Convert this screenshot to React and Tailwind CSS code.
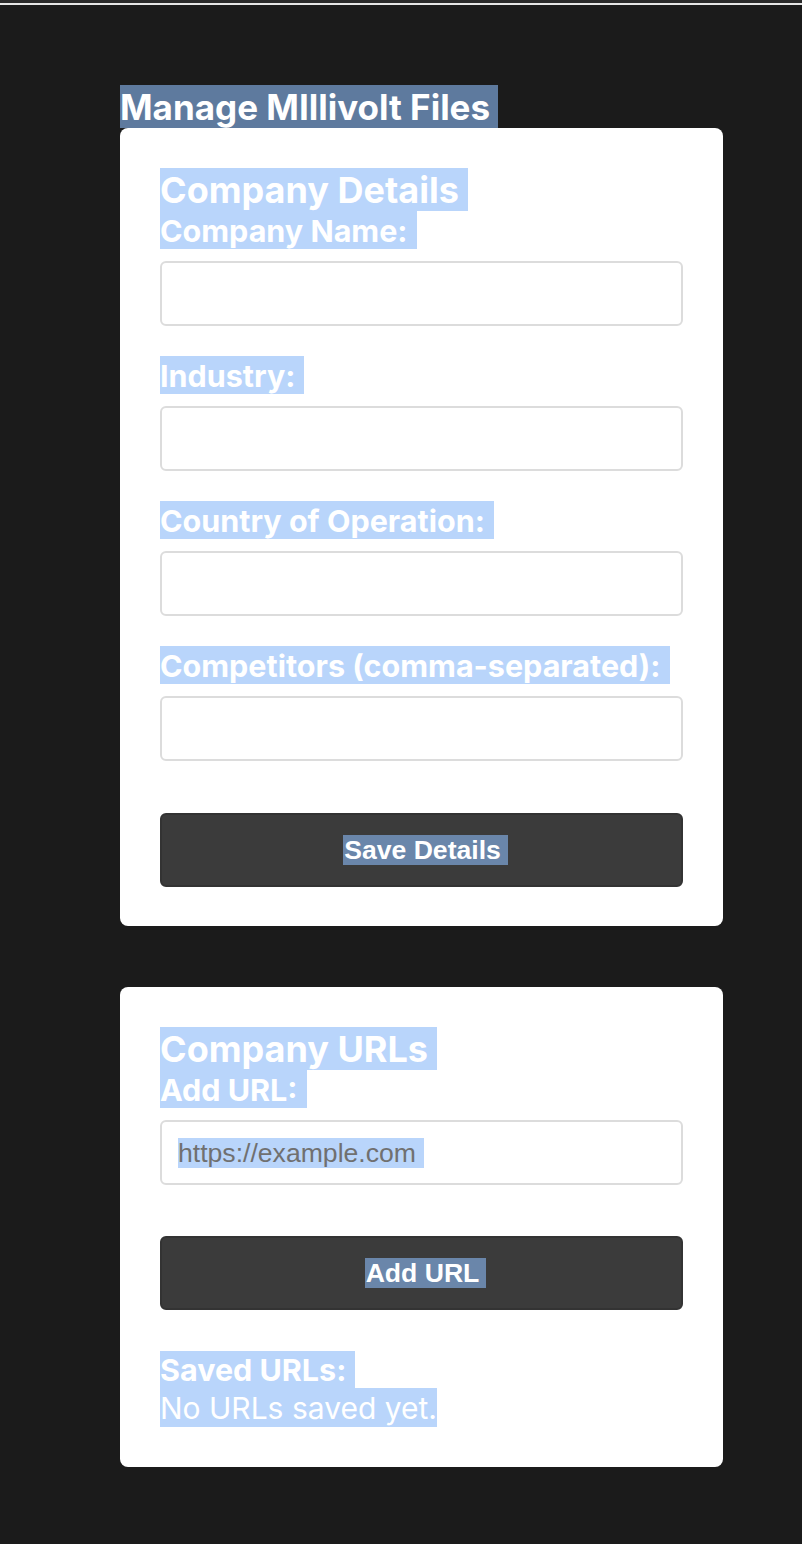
import React from 'react'

const sans = { fontFamily: 'Inter, "Noto Sans", sans-serif' }
const arial = { fontFamily: '"Liberation Sans", Arial, sans-serif' }

const Mark = ({ className = '', children }) => (
  <span className={`inline-block bg-[#b9d5fb] pr-[9px] ${className}`}>{children}</span>
)

const Label = ({ children }) => (
  <div className="h-[38px] text-[30.5px] font-bold leading-[39px] text-white">
    <Mark className="h-[38px]">{children}</Mark>
  </div>
)

const Field = ({ label, placeholder, last }) => (
  <div className={last ? '' : 'mb-[30px]'}>
    <Label>{label}</Label>
    <div
      className="mt-[12px] flex h-[65px] w-full items-center rounded-[6px] border-2 border-[#dcdcdc] bg-white px-[16px]"
      style={arial}
    >
      {placeholder && (
        <span className="inline-block h-[30px] bg-[#b9d5fb] pr-[8px] text-[26.6px] leading-[30px] text-[#707070]">
          {placeholder}
        </span>
      )}
    </div>
  </div>
)

const Button = ({ children }) => (
  <button
    className="flex h-[74px] w-full items-center justify-center rounded-[6px] border-2 border-[#333333] bg-[#3b3b3b] text-[26.6px] font-bold text-white"
    style={arial}
  >
    <span className="ml-[8px] inline-block h-[30px] bg-[#6a86aa] pl-[1px] pr-[7px] leading-[30px]">{children}</span>
  </button>
)

const Heading = ({ children }) => (
  <div className="h-[43px] text-[36px] font-bold leading-[45px] text-white">
    <Mark className="h-[43px]">{children}</Mark>
  </div>
)

export default function App() {
  return (
    <div className="min-h-screen bg-[#1b1b1b]" style={sans}>
      <div className="h-[3px] bg-[#2a2a2a]" />
      <div className="h-[2px] bg-[#e6e6e6]" />

      <div className="pl-[120px] pt-[80px] pb-[77px]">
        <h1 className="h-[43px] text-[35px] font-bold leading-[44px] text-white">
          <span className="inline-block h-[43px] bg-[#5e7a9e] pr-[8px]">Manage MIllivolt Files</span>
        </h1>

        {/* Company details card */}
        <div className="w-[603px] rounded-[8px] bg-white px-[40px] pt-[40px] pb-[39px]">
          <Heading>Company Details</Heading>
          <Field label="Company Name:" />
          <Field label="Industry:" />
          <Field label="Country of Operation:" />
          <Field label="Competitors (comma-separated):" last />
          <div className="mt-[52px]">
            <Button>Save Details</Button>
          </div>
        </div>

        {/* URLs card */}
        <div className="mt-[61px] w-[603px] rounded-[8px] bg-white px-[40px] pt-[40px] pb-[40px]">
          <Heading>Company URLs</Heading>
          <Field label="Add URL:" placeholder="https://example.com" last />
          <div className="mt-[51px]">
            <Button>Add URL</Button>
          </div>
          <div className="mt-[41px]">
            <div className="h-[37px] text-[30.5px] font-bold leading-[38px] text-white">
              <Mark className="h-[37px]">Saved URLs:</Mark>
            </div>
            <div className="h-[39px] text-[30px] leading-[40px] text-white">
              <span className="inline-block h-[39px] bg-[#b9d5fb]">No URLs saved yet.</span>
            </div>
          </div>
        </div>
      </div>
    </div>
  )
}
